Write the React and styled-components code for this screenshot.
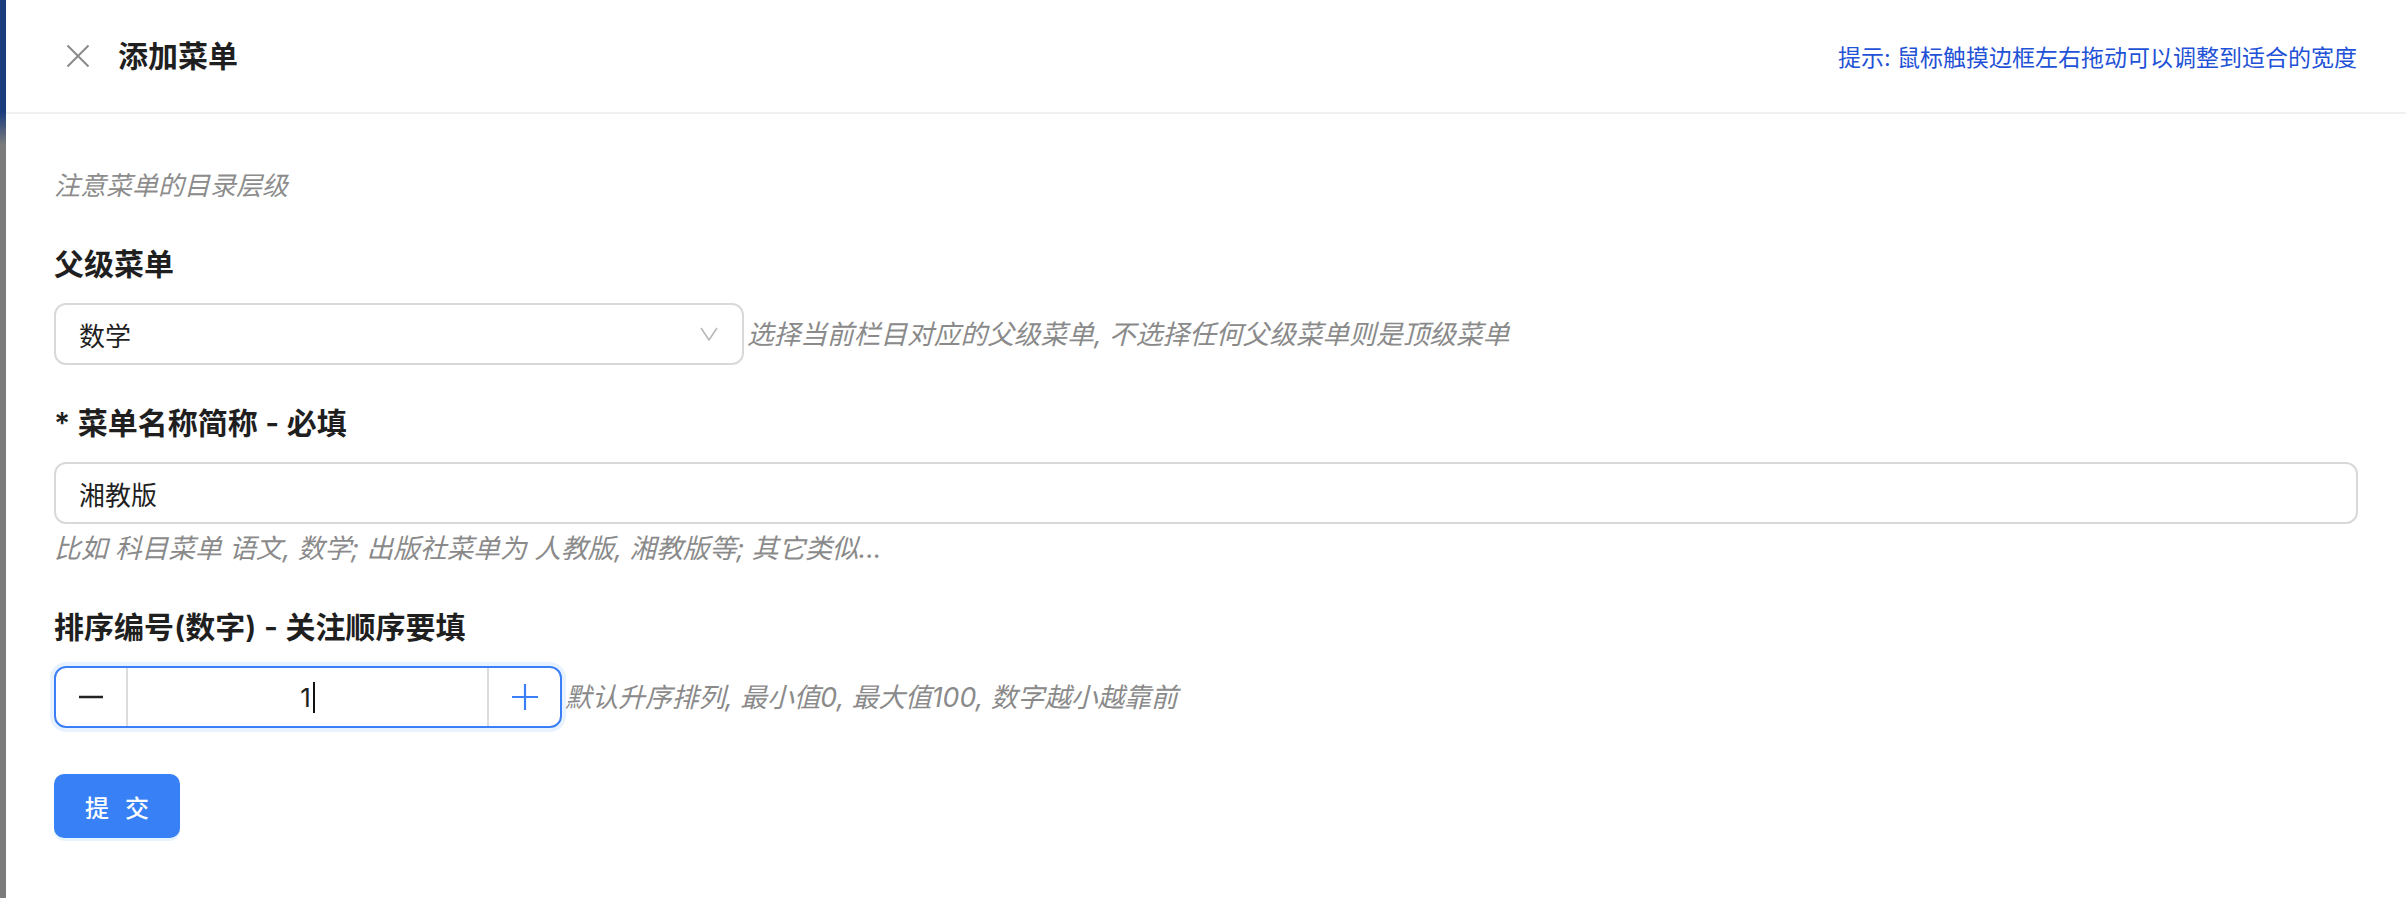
import React from "react";
import styled, { createGlobalStyle } from "styled-components";

const GlobalStyle = createGlobalStyle`
  html, body {
    margin: 0;
    padding: 0;
    background: #fff;
  }
  body {
    font-family: Inter, "Noto Sans CJK SC", sans-serif;
    color: #1f1f1f;
  }
  * {
    box-sizing: border-box;
  }
`;

const Page = styled.div`
  display: flex;
  width: 100vw;
  height: 898px;
  overflow: hidden;
`;

// the darkened page peeking out from behind the drawer
const Backdrop = styled.div`
  width: 6px;
  flex-shrink: 0;
  background: linear-gradient(
    to bottom,
    #1b3d7c 0,
    #1b3d7c 112px,
    #7b7b7b 145px,
    #7b7b7b 100%
  );
`;

const Drawer = styled.div`
  flex: 1;
  display: flex;
  flex-direction: column;
  background: #fff;
`;

const Header = styled.header`
  height: 114px;
  display: flex;
  align-items: center;
  padding: 0 49px 0 60px;
  border-bottom: 2px solid #f0f0f0;
`;

const CloseButton = styled.button`
  width: 24px;
  height: 24px;
  padding: 0;
  margin-right: 28px;
  border: none;
  background: none;
  display: flex;
  cursor: pointer;
`;

const Title = styled.h2`
  flex: 1;
  margin: 0;
  font-size: 30px;
  font-weight: 600;
  line-height: 1;
  color: #1f1f1f;
`;

const Hint = styled.span`
  font-size: 23px;
  color: #1f52d6;
`;

const Body = styled.div`
  padding: 52px 48px 0 48px;
`;

const Note = styled.p`
  margin: 0 0 36px;
  font-size: 26px;
  line-height: 40px;
  font-style: italic;
  color: #8c8c8c;
`;

const FormItem = styled.div`
  margin-bottom: ${(p) => p.$gap ?? 36}px;
`;

const Label = styled.label`
  display: block;
  font-size: 30px;
  line-height: 44px;
  font-weight: 600;
  color: #1f1f1f;
  margin-bottom: 17px;
`;

const Row = styled.div`
  display: flex;
  align-items: center;
  gap: 3px;
`;

const SelectBox = styled.div`
  width: 690px;
  height: 62px;
  border: 2px solid #d9d9d9;
  border-radius: 12px;
  padding: 0 24px 0 23px;
  display: flex;
  align-items: center;
  justify-content: space-between;
  font-size: 26px;
  color: #1f1f1f;
`;

const TextInput = styled.input`
  width: 100%;
  height: 62px;
  border: 2px solid #d9d9d9;
  border-radius: 12px;
  padding: 0 23px;
  font-family: inherit;
  font-size: 26px;
  color: #1f1f1f;
  outline: none;
  background: #fff;
`;

const Extra = styled.div`
  font-size: 26.7px;
  line-height: ${(p) => (p.$below ? "42px" : "40px")};
  margin-top: ${(p) => (p.$below ? "3px" : "0")};
  font-style: italic;
  color: #8a8a8a;
  white-space: nowrap;
`;

const NumberBox = styled.div`
  width: 508px;
  height: 62px;
  border: 2px solid #3b7ff6;
  border-radius: 12px;
  box-shadow: 0 0 0 4px #e9f2ff;
  display: grid;
  grid-template-columns: 72px 1fr 73px;
  overflow: hidden;
  flex-shrink: 0;
`;

const StepButton = styled.button`
  border: none;
  background: none;
  padding: 0;
  display: flex;
  align-items: center;
  justify-content: center;
  cursor: pointer;
  ${(p) =>
    p.$side === "left"
      ? "border-right: 2px solid #dcdcdc;"
      : "border-left: 2px solid #dcdcdc;"}
`;

const NumberValue = styled.div`
  display: flex;
  align-items: center;
  justify-content: center;
  font-size: 26px;
  color: #1f1f1f;
`;

const Caret = styled.span`
  display: inline-block;
  width: 2px;
  height: 31px;
  margin-left: 2px;
  background: #111;
`;

const SubmitButton = styled.button`
  width: 126px;
  height: 64px;
  border: none;
  border-radius: 10px;
  background: #3780f6;
  box-shadow: 0 3px 0 rgba(5, 145, 255, 0.1);
  color: #fff;
  font-family: inherit;
  font-size: 24px;
  font-weight: 500;
  cursor: pointer;

  span {
    letter-spacing: 0.2em;
    margin-right: -0.2em;
  }
`;

const CloseIcon = () => (
  <svg width="24" height="24" viewBox="0 0 24 24">
    <path d="M1.5 1.5 L22.5 22.5 M22.5 1.5 L1.5 22.5" stroke="#8a8a8a" strokeWidth="2" fill="none" />
  </svg>
);

const Chevron = () => (
  <svg width="18" height="14" viewBox="0 0 18 14">
    <polyline points="1,1 9,13 17,1" stroke="#b5b5b5" strokeWidth="1.5" fill="none" />
  </svg>
);

const Minus = () => (
  <svg width="24" height="24" viewBox="0 0 24 24">
    <path d="M0 12 H24" stroke="#222" strokeWidth="2.5" />
  </svg>
);

const Plus = () => (
  <svg width="26" height="26" viewBox="0 0 26 26">
    <path d="M0 13 H26 M13 0 V26" stroke="#3b7ff6" strokeWidth="2.2" />
  </svg>
);

export default function App() {
  return (
    <>
      <GlobalStyle />
      <Page>
        <Backdrop />
        <Drawer>
          <Header>
            <CloseButton aria-label="close">
              <CloseIcon />
            </CloseButton>
            <Title>添加菜单</Title>
            <Hint>提示: 鼠标触摸边框左右拖动可以调整到适合的宽度</Hint>
          </Header>
          <Body>
            <Note>注意菜单的目录层级</Note>

            <FormItem>
              <Label>父级菜单</Label>
              <Row>
                <SelectBox>
                  <span>数学</span>
                  <Chevron />
                </SelectBox>
                <Extra>选择当前栏目对应的父级菜单, 不选择任何父级菜单则是顶级菜单</Extra>
              </Row>
            </FormItem>

            <FormItem>
              <Label>* 菜单名称简称 - 必填</Label>
              <TextInput defaultValue="湘教版" />
              <Extra $below>比如 科目菜单 语文, 数学; 出版社菜单为 人教版, 湘教版等; 其它类似...</Extra>
            </FormItem>

            <FormItem $gap={46}>
              <Label>排序编号(数字) - 关注顺序要填</Label>
              <Row>
                <NumberBox>
                  <StepButton $side="left" aria-label="decrease">
                    <Minus />
                  </StepButton>
                  <NumberValue>
                    1<Caret />
                  </NumberValue>
                  <StepButton $side="right" aria-label="increase">
                    <Plus />
                  </StepButton>
                </NumberBox>
                <Extra>默认升序排列, 最小值0, 最大值100, 数字越小越靠前</Extra>
              </Row>
            </FormItem>

            <SubmitButton>
              <span>提 交</span>
            </SubmitButton>
          </Body>
        </Drawer>
      </Page>
    </>
  );
}
